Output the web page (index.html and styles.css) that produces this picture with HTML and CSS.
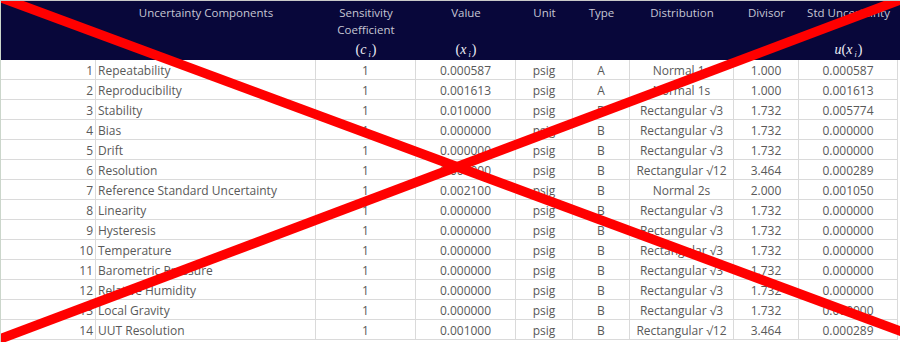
FILE: index.html
```html
<!DOCTYPE html>
<html>
<head>
<meta charset="utf-8">
<link rel="stylesheet" href="styles.css">
</head>
<body>
<div class="sheet">
  <div class="head row-grid">
    <div class="hc"></div>
    <div class="hc"><span class="lbl">Uncertainty Components</span></div>
    <div class="hc"><span class="lbl">Sensitivity<br>Coefficient</span><span class="math">(<i>c</i><sub>i</sub>)</span></div>
    <div class="hc"><span class="lbl">Value</span><span class="math">(<i>x</i><sub>i</sub>)</span></div>
    <div class="hc"><span class="lbl">Unit</span></div>
    <div class="hc"><span class="lbl">Type</span></div>
    <div class="hc"><span class="lbl">Distribution</span></div>
    <div class="hc"><span class="lbl">Divisor</span></div>
    <div class="hc"><span class="lbl">Std Uncertainty</span><span class="math"><i>u</i>(<i>x</i><sub>i</sub>)</span></div>
  </div>
  <div class="body">
    <div class="row row-grid"><div class="num">1</div><div class="name">Repeatability</div><div>1</div><div>0.000587</div><div>psig</div><div>A</div><div>Normal 1s</div><div>1.000</div><div>0.000587</div></div>
    <div class="row row-grid"><div class="num">2</div><div class="name">Reproducibility</div><div>1</div><div>0.001613</div><div>psig</div><div>A</div><div>Normal 1s</div><div>1.000</div><div>0.001613</div></div>
    <div class="row row-grid"><div class="num">3</div><div class="name">Stability</div><div>1</div><div>0.010000</div><div>psig</div><div>B</div><div>Rectangular √3</div><div>1.732</div><div>0.005774</div></div>
    <div class="row row-grid"><div class="num">4</div><div class="name">Bias</div><div>1</div><div>0.000000</div><div>psig</div><div>B</div><div>Rectangular √3</div><div>1.732</div><div>0.000000</div></div>
    <div class="row row-grid"><div class="num">5</div><div class="name">Drift</div><div>1</div><div>0.000000</div><div>psig</div><div>B</div><div>Rectangular √3</div><div>1.732</div><div>0.000000</div></div>
    <div class="row row-grid"><div class="num">6</div><div class="name">Resolution</div><div>1</div><div>0.001000</div><div>psig</div><div>B</div><div>Rectangular √12</div><div>3.464</div><div>0.000289</div></div>
    <div class="row row-grid"><div class="num">7</div><div class="name">Reference Standard Uncertainty</div><div>1</div><div>0.002100</div><div>psig</div><div>B</div><div>Normal 2s</div><div>2.000</div><div>0.001050</div></div>
    <div class="row row-grid"><div class="num">8</div><div class="name">Linearity</div><div>1</div><div>0.000000</div><div>psig</div><div>B</div><div>Rectangular √3</div><div>1.732</div><div>0.000000</div></div>
    <div class="row row-grid"><div class="num">9</div><div class="name">Hysteresis</div><div>1</div><div>0.000000</div><div>psig</div><div>B</div><div>Rectangular √3</div><div>1.732</div><div>0.000000</div></div>
    <div class="row row-grid"><div class="num">10</div><div class="name">Temperature</div><div>1</div><div>0.000000</div><div>psig</div><div>B</div><div>Rectangular √3</div><div>1.732</div><div>0.000000</div></div>
    <div class="row row-grid"><div class="num">11</div><div class="name">Barometric Pressure</div><div>1</div><div>0.000000</div><div>psig</div><div>B</div><div>Rectangular √3</div><div>1.732</div><div>0.000000</div></div>
    <div class="row row-grid"><div class="num">12</div><div class="name">Relative Humidity</div><div>1</div><div>0.000000</div><div>psig</div><div>B</div><div>Rectangular √3</div><div>1.732</div><div>0.000000</div></div>
    <div class="row row-grid"><div class="num">13</div><div class="name">Local Gravity</div><div>1</div><div>0.000000</div><div>psig</div><div>B</div><div>Rectangular √3</div><div>1.732</div><div>0.000000</div></div>
    <div class="row row-grid"><div class="num">14</div><div class="name">UUT Resolution</div><div>1</div><div>0.001000</div><div>psig</div><div>B</div><div>Rectangular √12</div><div>3.464</div><div>0.000289</div></div>
  </div>
  <svg class="cross" width="900" height="342" viewBox="0 0 900 342">
    <line x1="-10" y1="-6.4" x2="910" y2="334.7" stroke="#ff0000" stroke-width="9.5"/>
    <line x1="-10" y1="342.8" x2="910" y2="-3.8" stroke="#ff0000" stroke-width="9.5"/>
  </svg>
</div>
</body>
</html>
```

FILE: styles.css
```css
html, body {
  margin: 0;
  padding: 0;
  background: #ffffff;
  overflow: hidden;
}
.sheet {
  position: relative;
  width: 900px;
  height: 342px;
  box-sizing: border-box;
  border-top: 1px solid #c9c9c9;
  border-left: 1px solid #cbd6cb;
  font-family: "Open Sans", "Noto Sans", sans-serif;
  overflow: hidden;
}
.row-grid {
  display: grid;
  grid-template-columns: 95px 220px 100px 100px 57px 57px 104px 65px 99px;
}
.head {
  height: 59px;
  background: #08073a;
  color: #c6c6d4;
  font-size: 11.5px;
}
.hc {
  display: flex;
  flex-direction: column;
  align-items: center;
  padding-top: 3px;
  box-sizing: border-box;
  height: 59px;
}
.lbl {
  line-height: 17px;
  text-align: center;
}
.math {
  margin-top: auto;
  font-family: "Liberation Serif", "DejaVu Serif", serif;
  font-size: 14px;
  line-height: 16px;
  padding-bottom: 0;
  margin-bottom: -3px;
  color: #eeeef6;
}
.math sub {
  font-size: 8px;
  vertical-align: -3px;
  font-style: italic;
  margin-left: 2px;
  margin-right: 1px;
}
.row > div {
  box-sizing: border-box;
  height: 20px;
  padding-top: 2px;
  line-height: 18px;
  border-right: 1px solid #dadada;
  border-bottom: 1px solid #dadada;
  text-align: center;
  color: #595959;
  font-size: 12px;
  white-space: nowrap;
}
.row > div.num {
  text-align: right;
  padding-right: 2px;
}
.row > div.name {
  text-align: left;
  padding-left: 2px;
}
.cross {
  position: absolute;
  left: -1px;
  top: -1px;
  pointer-events: none;
}
```
